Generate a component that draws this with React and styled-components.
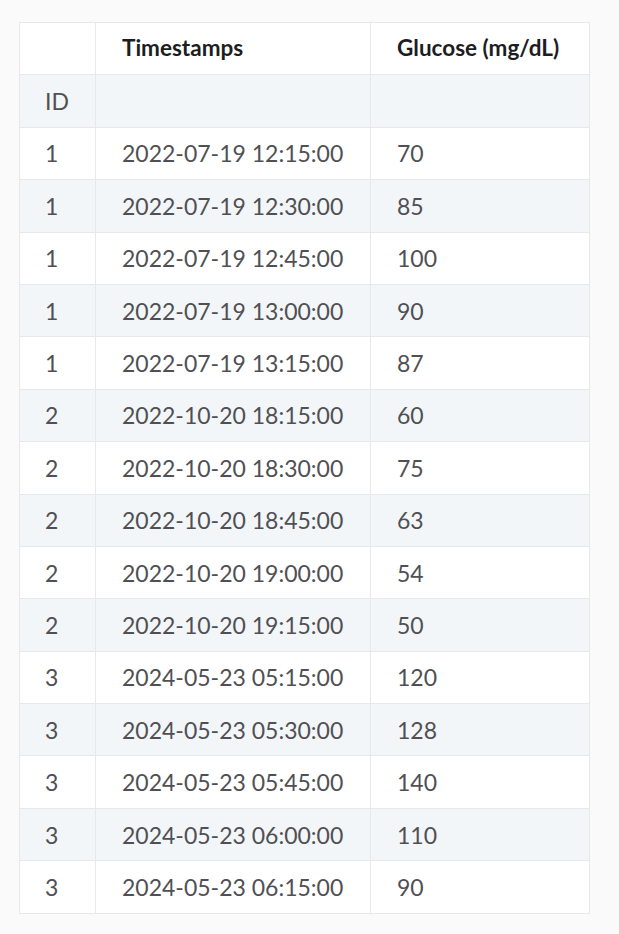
import React from 'react';
import styled, { createGlobalStyle } from 'styled-components';

const GlobalStyle = createGlobalStyle`
  body {
    margin: 0;
    background: #fafafa;
    font-family: Lato, "Open Sans", sans-serif;
  }
`;

const rows = [
  [1, '2022-07-19 12:15:00', 70],
  [1, '2022-07-19 12:30:00', 85],
  [1, '2022-07-19 12:45:00', 100],
  [1, '2022-07-19 13:00:00', 90],
  [1, '2022-07-19 13:15:00', 87],
  [2, '2022-10-20 18:15:00', 60],
  [2, '2022-10-20 18:30:00', 75],
  [2, '2022-10-20 18:45:00', 63],
  [2, '2022-10-20 19:00:00', 54],
  [2, '2022-10-20 19:15:00', 50],
  [3, '2024-05-23 05:15:00', 120],
  [3, '2024-05-23 05:30:00', 128],
  [3, '2024-05-23 05:45:00', 140],
  [3, '2024-05-23 06:00:00', 110],
  [3, '2024-05-23 06:15:00', 90],
];

const Page = styled.div`
  padding: 22px 30px 20px 19px;
`;

const Table = styled.table`
  width: 570px;
  border-collapse: collapse;
  table-layout: fixed;
  background: #fff;
  border: 1px solid #e6e8e9;
`;

const Row = styled.tr`
  height: 52.4px;
  background: ${(props) => (props.striped ? '#f3f6f8' : '#fff')};
`;

const HeadCell = styled.th`
  text-align: left;
  padding: 0 26px 3px;
  font-size: 22.5px;
  font-weight: 700;
  color: #1d1d1f;
  border: 1px solid #e6e8e9;
  white-space: nowrap;
`;

const Cell = styled.td`
  padding: 0 26px;
  font-size: 23px;
  color: #505054;
  border: 1px solid #e6e8e9;
  white-space: nowrap;
`;

const IdCell = styled(Cell)`
  padding: 0 25px;
`;

const App = () => {
  return (
    <Page>
      <GlobalStyle />
      <Table>
        <colgroup>
          <col style={{ width: 76 }} />
          <col style={{ width: 275 }} />
          <col style={{ width: 219 }} />
        </colgroup>
        <thead>
          <Row>
            <HeadCell />
            <HeadCell>Timestamps</HeadCell>
            <HeadCell>Glucose (mg/dL)</HeadCell>
          </Row>
          <Row striped>
            <IdCell>ID</IdCell>
            <Cell />
            <Cell />
          </Row>
        </thead>
        <tbody>
          {rows.map((r, i) => (
            <Row key={i} striped={i % 2 === 1}>
              <IdCell>{r[0]}</IdCell>
              <Cell>{r[1]}</Cell>
              <Cell>{r[2]}</Cell>
            </Row>
          ))}
        </tbody>
      </Table>
    </Page>
  );
};

export default App;
